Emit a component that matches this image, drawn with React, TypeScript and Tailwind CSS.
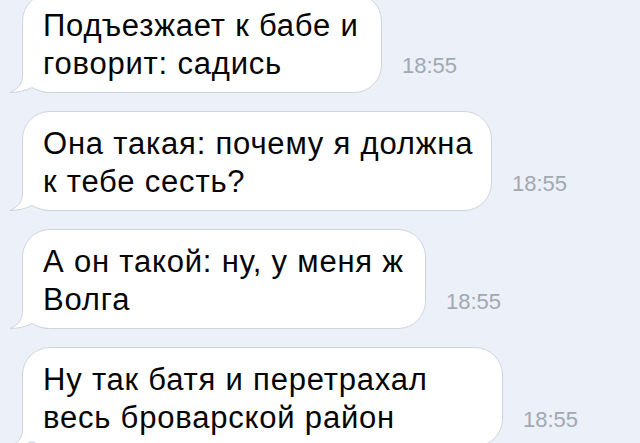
const messages = [
  { lines: ["Подъезжает к бабе и", "говорит: садись"], width: "w-[360px]" },
  { lines: ["Она такая: почему я должна", "к тебе сесть?"], width: "w-[470px]" },
  { lines: ["А он такой: ну, у меня ж", "Волга"], width: "w-[404px]" },
  { lines: ["Ну так батя и перетрахал", "весь броварской район"], width: "w-[481px]" },
];

function Tail() {
  return (
    <svg
      className="absolute left-[-15px] bottom-[-1px]"
      width="44"
      height="32"
      viewBox="0 0 44 32"
      fill="none"
    >
      <path
        d="M14.5 0 L14.5 14 C14.5 22 11 27.5 2 31.5 C10 31.5 18 29.5 24 26.5 C29 29 34 31.5 44 31.5 L44 0 Z"
        fill="#ffffff"
      />
      <path
        d="M14.5 0 L14.5 14 C14.5 22 11 27.5 2 31.5 C10 31.5 18 29.5 24 26.5 C29 29 34 31.5 44 31.5"
        stroke="#cfd4dc"
        strokeWidth="1"
      />
    </svg>
  );
}

function Bubble({ lines, width }: { lines: string[]; width: string }) {
  return (
    <div
      className={`relative ${width} h-[100px] shrink-0 rounded-[28px] border border-[#cfd4dc] bg-white pl-[20px] pt-[13px] text-[31px] leading-[38px] tracking-[0.8px] text-[#050505]`}
    >
      <Tail />
      <div className="relative">
        {lines.map((line) => (
          <div key={line} className="whitespace-nowrap">
            {line}
          </div>
        ))}
      </div>
    </div>
  );
}

export default function App() {
  return (
    <div
      className="w-[640px] h-[443px] overflow-hidden bg-[#ecf0f8]"
      style={{ fontFamily: '"Liberation Sans", Arial, sans-serif' }}
    >
      <div className="-mt-[7px] flex flex-col gap-[18px] pl-[22px]">
        {messages.map((m, i) => (
          <div key={i} className="flex items-end">
            <Bubble lines={m.lines} width={m.width} />
            <span className="ml-[20px] mb-[16px] text-[22px] leading-[22px] text-[#a1a8b1]">
              18:55
            </span>
          </div>
        ))}
      </div>
    </div>
  );
}
